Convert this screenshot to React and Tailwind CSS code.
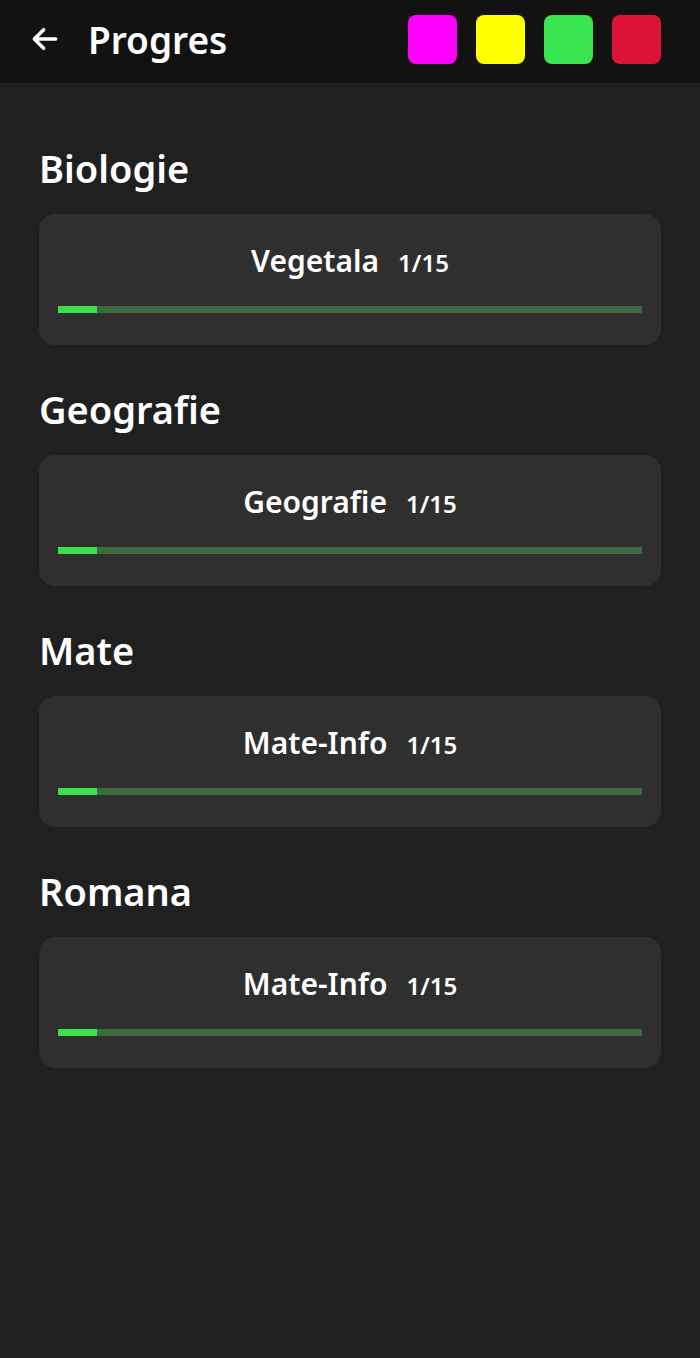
import React from 'react';

const subjects = [
  { name: 'Biologie', chapter: 'Vegetala', done: 1, total: 15 },
  { name: 'Geografie', chapter: 'Geografie', done: 1, total: 15 },
  { name: 'Mate', chapter: 'Mate-Info', done: 1, total: 15 },
  { name: 'Romana', chapter: 'Mate-Info', done: 1, total: 15 },
];

const BackArrow = () => (
  <svg width="32" height="32" viewBox="0 0 24 24" fill="none" stroke="currentColor" strokeWidth="2.6" strokeLinecap="round" strokeLinejoin="round">
    <path d="M20 12H5M11 5l-7 7 7 7" />
  </svg>
);

const ProgressCard = ({ chapter, done, total }) => (
  <div className="bg-[#2f2f2f] rounded-2xl h-[131px] px-[19px] pt-[27px]">
    <div className="flex items-baseline justify-center gap-[19px] text-white">
      <span className="text-[30px] font-semibold leading-[40px]">{chapter}</span>
      <span className="text-[24px] font-semibold">{done}/{total}</span>
    </div>
    <div className="mt-[25px] h-[7px] bg-[#3a6a3e] flex">
      <div className="h-full bg-[#3ae04c]" style={{ width: `${(done / total) * 100}%` }} />
    </div>
  </div>
);

export default function App() {
  return (
    <div className="w-[700px] h-[1358px] bg-[#202020] font-['Noto_Sans',sans-serif]">
      <header className="h-[83px] bg-[#121212] flex items-center pl-[29px] pr-[39px] pb-[5px]">
        <div className="text-white"><BackArrow /></div>
        <h1 className="ml-[27px] text-[37px] font-semibold text-white leading-none">Progres</h1>
        <div className="ml-auto flex gap-[19px]">
          <div className="w-[49px] h-[49px] rounded-lg bg-[#ff00ff]" />
          <div className="w-[49px] h-[49px] rounded-lg bg-[#ffff00]" />
          <div className="w-[49px] h-[49px] rounded-lg bg-[#39e652]" />
          <div className="w-[49px] h-[49px] rounded-lg bg-[#dc143a]" />
        </div>
      </header>
      <main className="px-[39px] pt-[60px] flex flex-col gap-[39px]">
        {subjects.map((s) => (
          <section key={s.name}>
            <h2 className="text-[38px] font-semibold text-white leading-[50px] mb-[21px]">{s.name}</h2>
            <ProgressCard chapter={s.chapter} done={s.done} total={s.total} />
          </section>
        ))}
      </main>
    </div>
  );
}
